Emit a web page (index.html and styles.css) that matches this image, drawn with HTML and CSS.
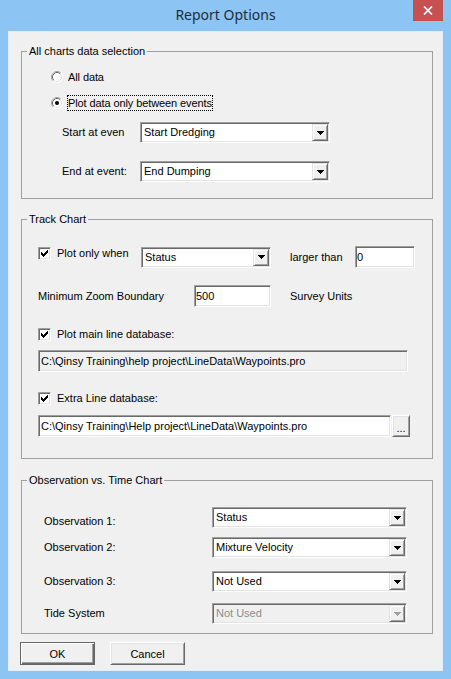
FILE: index.html
```html
<!DOCTYPE html>
<html lang="en">
  <head>
    <meta charset="UTF-8" />
    <meta name="viewport" content="width=device-width, initial-scale=1.0" />
    <title>Report Options</title>
    <link rel="stylesheet" href="styles.css">
  </head>
  <body>
    <div class="window">
      <div class="titlebar">
        <span></span>
        <div class="title">Report Options</div>
        <div class="close">
          <svg width="10" height="9" viewBox="0 0 10 9"><path d="M1 .5l8 8M9 .5l-8 8" stroke="#fff" stroke-width="1.7" fill="none"/></svg>
        </div>
      </div>

      <div class="client">
        <!-- all charts -->
        <fieldset class="group">
          <legend>All charts data selection</legend>
          <div class="events">
            <div class="option">
              <svg class="radio" width="12" height="12" viewBox="0 0 12 12">
                <circle cx="6" cy="6" r="5.5" fill="#fff"/>
                <path d="M2.11 9.89A5.5 5.5 0 0 1 9.89 2.11" fill="none" stroke="#a0a0a0"/>
                <path d="M9.89 2.11A5.5 5.5 0 0 1 2.11 9.89" fill="none" stroke="#fff"/>
                <path d="M2.82 9.18A4.5 4.5 0 0 1 9.18 2.82" fill="none" stroke="#696969"/>
                <path d="M9.18 2.82A4.5 4.5 0 0 1 2.82 9.18" fill="none" stroke="#e3e3e3"/>
              </svg>
              <span class="caption">All data</span>
            </div>
            <div class="option">
              <svg class="radio" width="12" height="12" viewBox="0 0 12 12">
                <circle cx="6" cy="6" r="5.5" fill="#fff"/>
                <path d="M2.11 9.89A5.5 5.5 0 0 1 9.89 2.11" fill="none" stroke="#a0a0a0"/>
                <path d="M9.89 2.11A5.5 5.5 0 0 1 2.11 9.89" fill="none" stroke="#fff"/>
                <path d="M2.82 9.18A4.5 4.5 0 0 1 9.18 2.82" fill="none" stroke="#696969"/>
                <path d="M9.18 2.82A4.5 4.5 0 0 1 2.82 9.18" fill="none" stroke="#e3e3e3"/>
                <circle cx="6" cy="6" r="2" fill="#000"/>
              </svg>
              <span class="caption focus">Plot data only between events</span>
            </div>

            <div class="field-row">
              <span class="field-label">Start at even</span>
              <div class="combo">
                <span class="combo-text">Start Dredging</span>
                <span class="combo-btn"><svg width="7" height="4"><path d="M0 0h7v1H0zM1 1h5v1H1zM2 2h3v1H2zM3 3h1v1H3z"/></svg></span>
              </div>
            </div>
            <div class="field-row">
              <span class="field-label">End at event:</span>
              <div class="combo">
                <span class="combo-text">End Dumping</span>
                <span class="combo-btn"><svg width="7" height="4"><path d="M0 0h7v1H0zM1 1h5v1H1zM2 2h3v1H2zM3 3h1v1H3z"/></svg></span>
              </div>
            </div>
          </div>
        </fieldset>

        <!-- track chart -->
        <fieldset class="group track-group">
          <legend>Track Chart</legend>
          <div class="track">
            <div class="row row-when">
              <label class="check-label when">
                <span class="checkbox"><svg width="9" height="9"><path d="M1 3h1v3H1zM2 4h1v3H2zM3 5h1v3H3zM4 4h1v3H4zM5 3h1v3H5zM6 2h1v3H6zM7 1h1v3H7z"/></svg></span>
                Plot only when
              </label>
              <div class="combo combo-status">
                <span class="combo-text">Status</span>
                <span class="combo-btn"><svg width="7" height="4"><path d="M0 0h7v1H0zM1 1h5v1H1zM2 2h3v1H2zM3 3h1v1H3z"/></svg></span>
              </div>
              <span class="side-label">larger than</span>
              <div class="edit edit-value">0</div>
            </div>

            <div class="row row-zoom">
              <span class="zoom-label">Minimum Zoom Boundary</span>
              <div class="edit edit-zoom">500</div>
              <span class="side-label">Survey Units</span>
            </div>

            <label class="check-label main-line">
              <span class="checkbox"><svg width="9" height="9"><path d="M1 3h1v3H1zM2 4h1v3H2zM3 5h1v3H3zM4 4h1v3H4zM5 3h1v3H5zM6 2h1v3H6zM7 1h1v3H7z"/></svg></span>
              Plot main line database:
            </label>
            <div class="edit readonly">C:\Qinsy Training\help project\LineData\Waypoints.pro</div>

            <label class="check-label extra-line">
              <span class="checkbox"><svg width="9" height="9"><path d="M1 3h1v3H1zM2 4h1v3H2zM3 5h1v3H3zM4 4h1v3H4zM5 3h1v3H5zM6 2h1v3H6zM7 1h1v3H7z"/></svg></span>
              Extra Line database:
            </label>
            <div class="row row-path">
              <div class="edit edit-path">C:\Qinsy Training\Help project\LineData\Waypoints.pro</div>
              <button class="btn btn-browse">...</button>
            </div>
          </div>
        </fieldset>

        <!-- observation vs time -->
        <fieldset class="group obs-group">
          <legend>Observation vs. Time Chart</legend>
          <div class="observation">
            <div class="field-row obs-1">
              <span class="field-label low">Observation 1:</span>
              <div class="combo">
                <span class="combo-text">Status</span>
                <span class="combo-btn"><svg width="7" height="4"><path d="M0 0h7v1H0zM1 1h5v1H1zM2 2h3v1H2zM3 3h1v1H3z"/></svg></span>
              </div>
            </div>
            <div class="field-row obs-2">
              <span class="field-label">Observation 2:</span>
              <div class="combo">
                <span class="combo-text">Mixture Velocity</span>
                <span class="combo-btn"><svg width="7" height="4"><path d="M0 0h7v1H0zM1 1h5v1H1zM2 2h3v1H2zM3 3h1v1H3z"/></svg></span>
              </div>
            </div>
            <div class="field-row obs-3">
              <span class="field-label">Observation 3:</span>
              <div class="combo">
                <span class="combo-text">Not Used</span>
                <span class="combo-btn"><svg width="7" height="4"><path d="M0 0h7v1H0zM1 1h5v1H1zM2 2h3v1H2zM3 3h1v1H3z"/></svg></span>
              </div>
            </div>
            <div class="field-row obs-4">
              <span class="field-label">Tide System</span>
              <div class="combo disabled">
                <span class="combo-text">Not Used</span>
                <span class="combo-btn"><svg width="7" height="4"><path d="M0 0h7v1H0zM1 1h5v1H1zM2 2h3v1H2zM3 3h1v1H3z"/></svg></span>
              </div>
            </div>
          </div>
        </fieldset>

        <div class="buttons">
          <button class="btn btn-default">OK</button>
          <button class="btn">Cancel</button>
        </div>
      </div>
    </div>
  </body>
</html>
```

FILE: styles.css
```css
* {
  box-sizing: border-box;
}

body {
  margin: 0;
  background-color: #8cc4f4;
  font-family: "Liberation Sans", Arial, sans-serif;
  font-size: 11px;
  line-height: 13px;
  color: #000;
}

.window {
  width: 451px;
  height: 679px;
  padding: 0 8px 8px;
  display: flex;
  flex-direction: column;
}

/* title bar */
.titlebar {
  height: 31px;
  display: grid;
  grid-template-columns: 1fr auto 1fr;
}

.title {
  font-family: "Noto Sans", "Open Sans", sans-serif;
  font-size: 14px;
  line-height: 30px;
  color: #1f2d3a;
}

.close {
  justify-self: end;
  width: 30px;
  height: 21px;
  background-color: #c75050;
  display: flex;
  align-items: center;
  justify-content: center;
}

/* client area */
.client {
  flex: 1;
  background-color: #f0f0f0;
  border: 1px solid #e4edf6;
  padding: 13px 9px 0 12px;
}

.group {
  margin: 0;
  padding: 0;
  border: 1px solid #a0a0a0;
}

.group legend {
  margin-left: 5px;
  padding: 0 2px;
  line-height: 13px;
}

.track-group {
  margin-top: 14px;
}

.obs-group {
  margin-top: 15px;
}

/* radios */
.events {
  padding: 9px 0 16px;
}

.option {
  display: flex;
  align-items: center;
  height: 20px;
  padding-left: 29px;
}

.option + .option {
  margin-top: 6px;
}

.radio {
  flex: none;
}

.caption {
  margin-left: 4px;
  border: 1px solid transparent;
  line-height: 14px;
  letter-spacing: -0.1px;
}

.caption.focus {
  border: 1px dotted #000;
}

.field-row {
  display: flex;
  align-items: center;
}

.events .field-row {
  padding-left: 40px;
  margin-top: 9px;
}

.events .field-row + .field-row {
  margin-top: 18px;
}

.events .field-label {
  width: 78px;
}

.events .combo {
  width: 190px;
}

/* combo box */
.combo {
  display: flex;
  height: 21px;
  padding: 1px;
  background-color: #fff;
  border: 1px solid;
  border-color: #a0a0a0 #fff #fff #a0a0a0;
  box-shadow: inset 1px 1px #696969, inset -1px -1px #e3e3e3;
}

.combo-text {
  flex: 1;
  padding-left: 2px;
  line-height: 17px;
  white-space: nowrap;
}

.combo-btn {
  width: 16px;
  background-color: #f0f0f0;
  border: 1px solid;
  border-color: #e3e3e3 #696969 #696969 #e3e3e3;
  box-shadow: inset 1px 1px #fff, inset -1px -1px #a0a0a0;
  display: flex;
  align-items: center;
  justify-content: center;
}

.combo-btn svg {
  fill: #000;
}

.combo.disabled {
  background-color: #f0f0f0;
  color: #8d8d8d;
}

.combo.disabled .combo-btn svg {
  fill: #a0a0a0;
}

/* edits */
.edit {
  height: 22px;
  padding: 0 1px;
  background-color: #fff;
  border: 1px solid;
  border-color: #a0a0a0 #fff #fff #a0a0a0;
  box-shadow: inset 1px 1px #696969, inset -1px -1px #e3e3e3;
  display: flex;
  align-items: center;
  white-space: nowrap;
}

.edit.readonly,
.edit-path {
  padding-left: 2px;
}

.edit.readonly {
  background-color: #f0f0f0;
  width: 370px;
  margin-top: 9px;
}

/* checkboxes */
.checkbox {
  flex: none;
  width: 13px;
  height: 13px;
  padding: 1px;
  background-color: #fff;
  border: 1px solid;
  border-color: #a0a0a0 #fff #fff #a0a0a0;
  box-shadow: inset 1px 1px #696969, inset -1px -1px #e3e3e3;
  display: flex;
}

.check-label {
  display: flex;
  align-items: center;
  gap: 6px;
  height: 13px;
}

/* track chart */
.track {
  padding: 20px 0 21px 16px;
}

.row {
  display: flex;
  align-items: center;
  height: 22px;
}

.check-label.when {
  width: 103px;
  align-self: flex-start;
  margin-top: 1px;
}

.combo-status {
  width: 130px;
}

.side-label {
  margin-left: 19px;
  width: 65px;
}

.edit-value {
  width: 60px;
}

.row-zoom {
  margin-top: 17px;
}

.zoom-label {
  width: 156px;
}

.edit-zoom {
  width: 77px;
}

.main-line {
  margin-top: 21px;
}

.extra-line {
  margin-top: 20px;
}

.row-path {
  margin-top: 10px;
}

.edit-path {
  width: 353px;
}

/* buttons */
.btn {
  font-family: inherit;
  font-size: 11px;
  color: #000;
  background-color: #f0f0f0;
  border: 1px solid;
  border-color: #fff #696969 #696969 #fff;
  box-shadow: inset 1px 1px #e3e3e3, inset -1px -1px #a0a0a0;
  padding: 0;
}

.btn-browse {
  width: 18px;
  height: 22px;
  margin-left: 1px;
  line-height: 20px;
  padding-top: 2px;
}

.buttons {
  display: flex;
  gap: 15px;
  margin-top: 8px;
  margin-left: -1px;
}

.buttons .btn {
  width: 75px;
  height: 23px;
}

.btn-default {
  border: 1px solid #646464;
  box-shadow: inset 1px 1px #fff, inset -1px -1px #696969, inset -2px -2px #a0a0a0;
}

/* observation vs time */
.observation {
  padding: 20px 0 9px 22px;
}

.observation .field-label {
  width: 168px;
}

.observation .combo {
  width: 195px;
}

.field-label.low {
  align-self: stretch;
  padding-top: 8px;
}

.obs-2 {
  margin-top: 9px;
}

.obs-3 {
  margin-top: 13px;
}

.obs-4 {
  margin-top: 11px;
}
```
